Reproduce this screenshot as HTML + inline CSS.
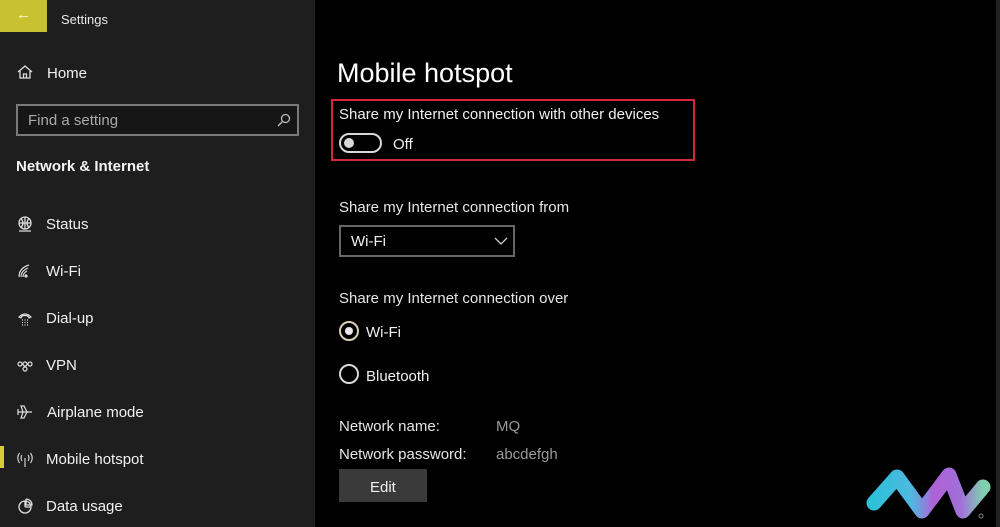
<!DOCTYPE html>
<html><head><style>
*{margin:0;padding:0;box-sizing:border-box}
body{width:1000px;height:527px;overflow:hidden;background:#000;font-family:"Liberation Sans",sans-serif;color:#fff;position:relative}
.sb{position:absolute;left:0;top:0;width:315px;height:527px;background:#1e1e1e}
.a{position:absolute;white-space:nowrap}
.nav{font-size:15px;color:#f0f0f0}
.ic{position:absolute;left:16px;width:18px;height:18px}
</style></head><body>
<div class="sb"></div>
<div class="a" style="left:0;top:0;width:47px;height:32px;background:#c8c230"></div>
<div class="a" style="left:16px;top:6px;font-size:15px;color:#fffbd0">←</div>
<div class="a" style="left:61px;top:12px;font-size:13px;color:#e8e8e8">Settings</div>
<svg class="ic" style="top:63px" viewBox="0 0 18 18" fill="none" stroke="#ddd" stroke-width="1.3"><path d="M2 9L9 3L16 9M4 8V15H14V8M7.5 15V11H10.5V15"/></svg>
<div class="a nav" style="left:47px;top:65px">Home</div>
<div class="a" style="left:16px;top:104px;width:283px;height:32px;border:2px solid #7a7a7a;background:#161616"></div>
<div class="a" style="left:28px;top:112px;font-size:15px;color:#aaa">Find a setting</div>
<svg class="a" style="left:276px;top:112px" width="16" height="16" viewBox="0 0 16 16" fill="none" stroke="#bbb" stroke-width="1.3"><circle cx="9.5" cy="6.5" r="4"/><path d="M6.5 9.5L2 14"/></svg>
<div class="a" style="left:16px;top:158px;font-size:15px;font-weight:bold;color:#f4f4f4">Network &amp; Internet</div>
<svg class="ic" style="top:215px" viewBox="0 0 18 18" fill="none" stroke="#ddd" stroke-width="1.3"><circle cx="9" cy="8" r="6"/><path d="M3 8H15M9 2V14M5 3.5Q9 8 5 12.5M13 3.5Q9 8 13 12.5M3 16H15"/></svg>
<div class="a nav" style="left:46px;top:216px">Status</div>
<svg class="ic" style="top:262px" viewBox="0 0 18 18" fill="none" stroke="#ddd" stroke-width="1.2"><path d="M3 15Q3 6 13 3M5 15Q5 9 12 6M7 15Q7 11 11 9"/><circle cx="10" cy="14" r="1" fill="#ddd"/></svg>
<div class="a nav" style="left:46px;top:263px">Wi-Fi</div>
<svg class="ic" style="top:310px" viewBox="0 0 18 18" fill="none" stroke="#ddd" stroke-width="1.2"><path d="M3 7Q9 1 15 7L13 8L12 6Q9 5 6 6L5 8Z"/><path d="M6 10H12M6 12.5H12M6 15H12" stroke-dasharray="1 1.5"/></svg>
<div class="a nav" style="left:46px;top:310px">Dial-up</div>
<svg class="ic" style="top:357px" viewBox="0 0 18 18" fill="none" stroke="#ddd" stroke-width="1.2"><circle cx="4" cy="7" r="2"/><circle cx="14" cy="7" r="2"/><circle cx="9" cy="7" r="2"/><circle cx="9" cy="12" r="2"/></svg>
<div class="a nav" style="left:46px;top:357px">VPN</div>
<svg class="ic" style="top:403px" viewBox="0 0 18 18" fill="none" stroke="#ddd" stroke-width="1.2"><path d="M2 9H16M7 9L5 3H8L11 9L8 15H5L7 9M2 6V12"/></svg>
<div class="a nav" style="left:47px;top:404px">Airplane mode</div>
<div class="a" style="left:0;top:446px;width:4px;height:22px;background:#d6cc36"></div>
<svg class="ic" style="top:451px" viewBox="0 0 18 18" fill="none" stroke="#ddd" stroke-width="1.1"><path d="M9 7V16M6 4Q4 7 6 10M12 4Q14 7 12 10M3.5 2Q0 7 3.5 12M14.5 2Q18 7 14.5 12"/></svg>
<div class="a nav" style="left:46px;top:451px">Mobile hotspot</div>
<svg class="ic" style="top:497px" viewBox="0 0 18 18" fill="none" stroke="#ddd" stroke-width="1.3"><circle cx="9" cy="10" r="6"/><path d="M9 10V4M9 10H15M10 2V8H16A6 6 0 0 0 10 2"/></svg>
<div class="a nav" style="left:46px;top:498px">Data usage</div>

<div class="a" style="left:337px;top:58px;font-size:27px;color:#fff">Mobile hotspot</div>
<div class="a" style="left:331px;top:99px;width:364px;height:62px;border:2px solid #d4283a"></div>
<div class="a" style="left:339px;top:106px;font-size:15px;color:#f0f0f0">Share my Internet connection with other devices</div>
<div class="a" style="left:339px;top:133px;width:43px;height:20px;border:2px solid #d8d8d8;border-radius:10px"></div>
<div class="a" style="left:344px;top:138px;width:10px;height:10px;border-radius:50%;background:#d8d8d8"></div>
<div class="a" style="left:393px;top:136px;font-size:15px;color:#f0f0f0">Off</div>
<div class="a" style="left:339px;top:199px;font-size:15px;color:#e6e6e6">Share my Internet connection from</div>
<div class="a" style="left:339px;top:225px;width:176px;height:32px;border:2px solid #666"></div>
<div class="a" style="left:351px;top:233px;font-size:15px;color:#f0f0f0">Wi-Fi</div>
<svg class="a" style="left:494px;top:236px" width="14" height="10" viewBox="0 0 14 10" fill="none" stroke="#ccc" stroke-width="1.3"><path d="M1 2L7 8L13 2"/></svg>
<div class="a" style="left:339px;top:290px;font-size:15px;color:#e6e6e6">Share my Internet connection over</div>
<div class="a" style="left:339px;top:321px;width:20px;height:20px;border:2px solid #d8d0b8;border-radius:50%"></div>
<div class="a" style="left:345px;top:327px;width:8px;height:8px;border-radius:50%;background:#e8e8e8"></div>
<div class="a" style="left:366px;top:324px;font-size:15px;color:#f0f0f0">Wi-Fi</div>
<div class="a" style="left:339px;top:364px;width:20px;height:20px;border:2px solid #d8d8d8;border-radius:50%"></div>
<div class="a" style="left:366px;top:368px;font-size:15px;color:#f0f0f0">Bluetooth</div>
<div class="a" style="left:339px;top:418px;font-size:15px;color:#e6e6e6">Network name:</div>
<div class="a" style="left:496px;top:418px;font-size:15px;color:#999">MQ</div>
<div class="a" style="left:339px;top:446px;font-size:15px;color:#e6e6e6">Network password:</div>
<div class="a" style="left:496px;top:446px;font-size:15px;color:#999">abcdefgh</div>
<div class="a" style="left:339px;top:469px;width:88px;height:33px;background:#3a3a3a"></div>
<div class="a" style="left:370px;top:479px;font-size:15px;color:#f0f0f0">Edit</div>
<div class="a" style="left:996px;top:0;width:4px;height:527px;background:#222"></div>
<svg class="a" style="left:850px;top:440px" width="150" height="87" viewBox="0 0 150 87">
<defs><linearGradient id="g" x1="0" x2="1"><stop offset="0" stop-color="#2ec0d8"/><stop offset=".35" stop-color="#50b8e0"/><stop offset=".55" stop-color="#b060d8"/><stop offset=".8" stop-color="#a070d8"/><stop offset="1" stop-color="#80d0b0"/></linearGradient></defs>
<path d="M24 63L47 37L72 71L99 35L113 71L133 47" fill="none" stroke="url(#g)" stroke-width="15" stroke-linecap="round" stroke-linejoin="round"/>
<circle cx="131" cy="76" r="2" fill="none" stroke="#888"/></svg>
</body></html>
